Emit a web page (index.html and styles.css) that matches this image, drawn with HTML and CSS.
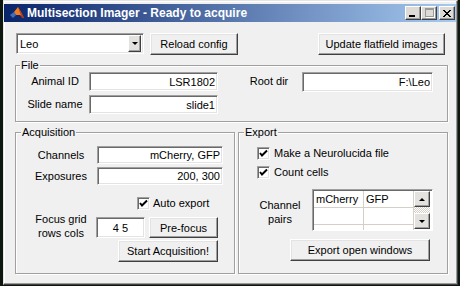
FILE: index.html
```html
<!DOCTYPE html>
<html lang="en">

<head>
    <meta charset="UTF-8">
    <title>Multisection Imager</title>
    <link rel="stylesheet" href="styles.css">
</head>

<body>

    <div class="window">
        <div class="titlebar">
            <svg class="app-icon" width="14" height="12" viewBox="0 0 14 12">
                <polygon points="0,8 4,5 6,8 3,11" fill="#3a6fc0" />
                <polygon points="4,5 8,0 11,5 14,11 10,8 6,8" fill="#ee7a22" />
                <polygon points="8,0 11,5 14,11 12,11" fill="#c2360f" />
            </svg>
            <span class="title">Multisection Imager - Ready to acquire</span>
            <div class="caption-btns">
                <span class="cap-btn cap-min"><span class="min-bar"></span></span>
                <span class="cap-btn cap-max"><span class="max-box"></span></span>
                <span class="cap-btn cap-close">
                    <svg width="8" height="7" viewBox="0 0 8 7">
                        <path d="M0 0 L7 7 M1 0 L8 7 M7 0 L0 7 M8 0 L1 7" stroke="#000" stroke-width="1" />
                    </svg>
                </span>
            </div>
        </div>

        <div class="content">
            <div class="toolbar">
                <div class="popup">
                    <span class="popup-text">Leo</span>
                    <span class="popup-arrow"><span class="arrow-down"></span></span>
                </div>
                <button class="btn reload-btn">Reload config</button>
                <button class="btn flatfield-btn">Update flatfield images</button>
            </div>

            <div class="panel file-panel">
                <div class="panel-title">File</div>
                <div class="form-row">
                    <label class="lbl file-lbl">Animal ID</label>
                    <input class="edit file-edit" type="text" value="LSR1802">
                    <label class="lbl root-lbl">Root dir</label>
                    <input class="edit root-edit" type="text" value="F:\Leo">
                </div>
                <div class="form-row slide-row">
                    <label class="lbl file-lbl">Slide name</label>
                    <input class="edit file-edit" type="text" value="slide1">
                </div>
            </div>

            <div class="panel-row">
                <div class="panel acq-panel">
                    <div class="panel-title">Acquisition</div>
                    <div class="form-row channels-row">
                        <label class="lbl acq-lbl">Channels</label>
                        <input class="edit acq-edit" type="text" value="mCherry, GFP">
                    </div>
                    <div class="form-row exposures-row">
                        <label class="lbl acq-lbl">Exposures</label>
                        <input class="edit acq-edit" type="text" value="200, 300">
                    </div>
                    <div class="check-row auto-row">
                        <span class="check"><svg width="9" height="9" viewBox="0 0 9 9"><path d="M1 4 L3 6.5 L8 1.5" fill="none" stroke="#000" stroke-width="2" /></svg></span>
                        <span class="check-text">Auto export</span>
                    </div>
                    <div class="form-row focus-row">
                        <label class="lbl focus-lbl">Focus grid<br>rows cols</label>
                        <input class="edit grid-edit" type="text" value="4 5">
                        <button class="btn prefocus-btn">Pre-focus</button>
                    </div>
                    <button class="btn start-btn">Start Acquisition!</button>
                </div>

                <div class="panel export-panel">
                    <div class="panel-title">Export</div>
                    <div class="check-row neuro-row">
                        <span class="check"><svg width="9" height="9" viewBox="0 0 9 9"><path d="M1 4 L3 6.5 L8 1.5" fill="none" stroke="#000" stroke-width="2" /></svg></span>
                        <span class="check-text">Make a Neurolucida file</span>
                    </div>
                    <div class="check-row count-row">
                        <span class="check"><svg width="9" height="9" viewBox="0 0 9 9"><path d="M1 4 L3 6.5 L8 1.5" fill="none" stroke="#000" stroke-width="2" /></svg></span>
                        <span class="check-text">Count cells</span>
                    </div>
                    <div class="pairs-row">
                        <label class="lbl pairs-lbl">Channel<br>pairs</label>
                        <div class="table">
                            <div class="cells">
                                <div class="cell">mCherry</div>
                                <div class="cell">GFP</div>
                                <div class="cell"></div>
                                <div class="cell"></div>
                                <div class="cell"></div>
                                <div class="cell"></div>
                            </div>
                            <div class="scrollbar">
                                <span class="scroll-btn"><span class="arrow-up"></span></span>
                                <span class="scroll-track"></span>
                                <span class="scroll-btn"><span class="arrow-down"></span></span>
                            </div>
                        </div>
                    </div>
                    <button class="btn export-btn">Export open windows</button>
                </div>
            </div>
        </div>
    </div>

</body>

</html>
```

FILE: styles.css
```css
body {
    margin: 0;
    width: 460px;
    height: 286px;
    overflow: hidden;
    background-color: #0e170e;
    font-family: "Liberation Sans", Arial, sans-serif;
    font-size: 11px;
    color: #000;
}

.window {
    box-sizing: border-box;
    margin-left: 3px;
    width: 455px;
    height: 285px;
    background-color: #f0f0f0;
    border: 1px solid;
    border-color: #e4e4e4 #404040 #404040 #e4e4e4;
    box-shadow: inset -1px -1px 0 #9a9a9a, inset 1px 1px 0 #fff;
}

/* title bar */
.titlebar {
    display: flex;
    align-items: center;
    height: 18px;
    margin-top: 3px;
    margin-right: 1px;
    padding-left: 6px;
    background: linear-gradient(to right, #0a246a, #a6caf0);
}

.app-icon {
    flex: none;
}

.title {
    margin-left: 3px;
    color: #fff;
    font-weight: bold;
    font-size: 12px;
    white-space: nowrap;
}

.caption-btns {
    display: flex;
    margin-left: auto;
    margin-right: 1px;
}

.cap-btn {
    box-sizing: border-box;
    position: relative;
    display: flex;
    align-items: center;
    justify-content: center;
    width: 16px;
    height: 14px;
    background-color: #dedbd6;
    border: 1px solid;
    border-color: #fff #404040 #404040 #fff;
    box-shadow: inset -1px -1px 0 #9a9a9a;
}

.cap-close {
    margin-left: 2px;
}

.min-bar {
    position: absolute;
    left: 3px;
    bottom: 2px;
    width: 6px;
    height: 2px;
    background-color: #000;
}

.max-box {
    width: 7px;
    height: 6px;
    border: 1px solid #9a9a9a;
    border-top-width: 2px;
    box-shadow: 1px 1px 0 #fff;
    margin-top: -1px;
}

/* content */
.content {
    padding-left: 11px;
}

.toolbar {
    display: flex;
    align-items: flex-start;
    margin-top: 11px;
}

.btn {
    box-sizing: border-box;
    margin: 0;
    padding: 0;
    height: 22px;
    background-color: #f0f0f0;
    border: 1px solid;
    border-color: #fff #404040 #404040 #fff;
    box-shadow: inset -1px -1px 0 #a0a0a0, inset 1px 1px 0 #e3e3e3;
    font-family: inherit;
    font-size: 11px;
    color: #000;
    white-space: nowrap;
}

.popup {
    box-sizing: border-box;
    display: flex;
    align-items: center;
    margin-left: 1px;
    width: 128px;
    height: 21px;
    padding: 1px 2px 1px 2px;
    background-color: #fff;
    border: 1px solid;
    border-color: #a0a0a0 #fff #fff #a0a0a0;
    box-shadow: inset 1px 1px 0 #696969, inset -1px -1px 0 #e3e3e3;
}

.popup-text {
    flex: 1;
    padding-left: 1px;
}

.popup-arrow {
    box-sizing: border-box;
    display: flex;
    align-items: center;
    justify-content: center;
    width: 13px;
    height: 17px;
    background-color: #e4e2de;
    border: 1px solid;
    border-color: #fff #404040 #404040 #fff;
    box-shadow: inset -1px -1px 0 #a0a0a0;
}

.arrow-down {
    width: 0;
    height: 0;
    border-left: 3px solid transparent;
    border-right: 3px solid transparent;
    border-top: 3px solid #000;
}

.arrow-up {
    width: 0;
    height: 0;
    border-left: 3px solid transparent;
    border-right: 3px solid transparent;
    border-bottom: 3px solid #000;
}

.reload-btn {
    margin-left: 6px;
    width: 88px;
}

.flatfield-btn {
    margin-left: 80px;
    width: 127px;
}

/* panels */
.panel {
    box-sizing: border-box;
    border: 1px solid #a0a0a0;
    box-shadow: inset 1px 1px 0 #fff, 1px 1px 0 #fff;
}

.panel-title {
    width: fit-content;
    margin-top: -7px;
    margin-left: 4px;
    padding: 0 1px;
    line-height: 13px;
    background-color: #f0f0f0;
}

.file-panel {
    margin-top: 10px;
    width: 433px;
    height: 57px;
}

.form-row {
    display: flex;
    align-items: flex-start;
}

.lbl {
    text-align: center;
    white-space: nowrap;
}

.edit {
    box-sizing: border-box;
    margin: 0;
    padding: 0 2px 0 3px;
    background-color: #fff;
    border: 1px solid;
    border-color: #a0a0a0 #fff #fff #a0a0a0;
    box-shadow: inset 1px 1px 0 #696969, inset -1px -1px 0 #e3e3e3;
    font-family: inherit;
    font-size: 11px;
    color: #000;
    text-align: right;
    outline: none;
}

.file-lbl {
    margin-left: 5px;
    width: 68px;
    line-height: 19px;
}

.file-edit {
    width: 129px;
    height: 19px;
}

.root-lbl {
    margin-left: 25px;
    width: 52px;
    line-height: 19px;
}

.root-edit {
    margin-left: 7px;
    width: 131px;
    height: 20px;
}

.slide-row {
    margin-top: 3px;
}

.panel-row {
    display: flex;
    gap: 3px;
    margin-top: 10px;
}

.acq-panel {
    width: 220px;
    height: 142px;
}

.export-panel {
    width: 210px;
    height: 142px;
}

.acq-panel .panel-title,
.export-panel .panel-title {
    margin-left: 5px;
}

.channels-row {
    margin-top: 7px;
}

.exposures-row {
    margin-top: 3px;
}

.acq-lbl {
    margin-left: 10px;
    width: 70px;
    line-height: 18px;
}

.acq-edit {
    margin-left: 1px;
    width: 126px;
    height: 18px;
}

.check-row {
    display: flex;
    align-items: center;
}

.check {
    box-sizing: border-box;
    display: flex;
    align-items: center;
    justify-content: center;
    width: 13px;
    height: 13px;
    background-color: #fff;
    border: 1px solid;
    border-color: #a0a0a0 #fff #fff #a0a0a0;
    box-shadow: inset 1px 1px 0 #696969, inset -1px -1px 0 #e3e3e3;
}

.check-text {
    margin-left: 4px;
    line-height: 13px;
    white-space: nowrap;
}

.auto-row {
    margin-top: 12px;
    margin-left: 121px;
}

.auto-row .check-text {
    margin-left: 3px;
}

.focus-row {
    margin-top: 7px;
}

.focus-lbl {
    margin-top: -5px;
    margin-left: 10px;
    width: 70px;
    line-height: 14px;
}

.grid-edit {
    width: 49px;
    height: 21px;
    text-align: center;
    padding: 0;
}

.prefocus-btn {
    margin-left: 4px;
    width: 69px;
    height: 21px;
}

.start-btn {
    display: block;
    margin-left: 102px;
    width: 100px;
}

.neuro-row {
    margin-top: 8px;
    margin-left: 18px;
}

.count-row {
    margin-top: 6px;
    margin-left: 18px;
}

.pairs-row {
    display: flex;
    align-items: center;
    margin-top: 10px;
}

.pairs-lbl {
    margin-left: 13px;
    margin-top: 3px;
    width: 56px;
    line-height: 14px;
}

.table {
    box-sizing: border-box;
    display: flex;
    margin-left: 4px;
    width: 121px;
    height: 42px;
    padding: 1px 0 0 1px;
    background-color: #fff;
    border: 1px solid;
    border-color: #a0a0a0 #fff #fff #a0a0a0;
    box-shadow: inset 1px 1px 0 #696969;
    overflow: hidden;
}

.cells {
    display: grid;
    grid-template-columns: 49px 49px;
    grid-template-rows: 16px 16px 16px;
    gap: 1px;
    height: 39px;
    background-color: #d4d0c8;
    border-right: 1px solid #d4d0c8;
    overflow: hidden;
}

.cell {
    padding-left: 2px;
    line-height: 16px;
    background-color: #fff;
}

.scrollbar {
    display: flex;
    flex-direction: column;
    width: 16px;
}

.scroll-btn {
    box-sizing: border-box;
    display: flex;
    align-items: center;
    justify-content: center;
    height: 16px;
    background-color: #e4e2de;
    border: 1px solid;
    border-color: #fff #404040 #404040 #fff;
    box-shadow: inset -1px -1px 0 #a0a0a0;
}

.scroll-track {
    height: 6px;
    background: repeating-conic-gradient(#fff 0 25%, #d4d0c8 0 50%) 0 0 / 2px 2px;
}

.export-btn {
    display: block;
    margin-top: 8px;
    margin-left: 51px;
    width: 140px;
}
```
